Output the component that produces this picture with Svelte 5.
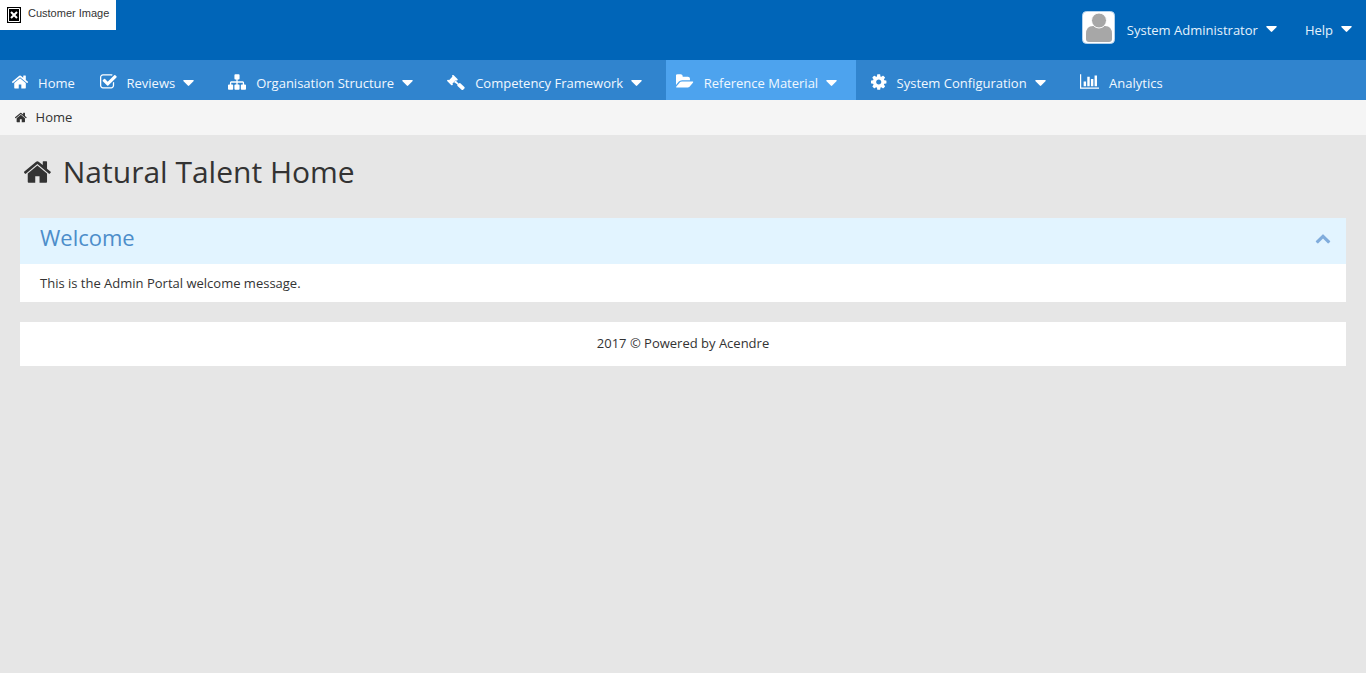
<script>
  const icons = {
    home: { x: 96, w: 1600, d: 'M1472 992v480q0 26-19 45t-45 19h-384v-384h-256v384h-384q-26 0-45-19t-19-45v-480q0-1 .5-3t.5-3l575-474 575 474q1 2 1 6zm223-69l-62 74q-8 9-21 11h-3q-13 0-21-7l-692-577-692 577q-12 8-24 7-13-2-21-11l-62-74q-8-10-7-23.5t11-21.5l719-599q32-26 76-26t76 26l244 204v-195q0-14 9-23t23-9h192q14 0 23 9t9 23v408l219 182q10 8 11 21.5t-7 23.5z' },
    check: { x: 64, w: 1664, d: 'M1472 930v318q0 119-84.5 203.5t-203.5 84.5h-832q-119 0-203.5-84.5t-84.5-203.5v-832q0-119 84.5-203.5t203.5-84.5h832q63 0 117 25 15 7 18 23 3 17-9 29l-49 49q-10 10-23 10-3 0-9-2-23-6-45-6h-832q-66 0-113 47t-47 113v832q0 66 47 113t113 47h832q66 0 113-47t47-113v-254q0-13 9-22l64-64q10-10 23-10 6 0 12 3 20 8 20 29zm231-489l-814 814q-24 24-57 24t-57-24l-430-430q-24-24-24-57t24-57l110-110q24-24 57-24t57 24l263 263 647-647q24-24 57-24t57 24l110 110q24 24 24 57t-24 57z' },
    sitemap: { x: 0, w: 1792, d: 'M1792 1248v320q0 40-28 68t-68 28h-320q-40 0-68-28t-28-68v-320q0-40 28-68t68-28h96v-192h-512v192h96q40 0 68 28t28 68v320q0 40-28 68t-68 28h-320q-40 0-68-28t-28-68v-320q0-40 28-68t68-28h96v-192h-512v192h96q40 0 68 28t28 68v320q0 40-28 68t-68 28h-320q-40 0-68-28t-28-68v-320q0-40 28-68t68-28h96v-192q0-52 38-90t90-38h512v-192h-96q-40 0-68-28t-28-68v-320q0-40 28-68t68-28h320q40 0 68 28t28 68v320q0 40-28 68t-68 28h-96v192h512q52 0 90 38t38 90v192h96q40 0 68 28t28 68z' },
    gavel: { x: 0, w: 1792, d: 'M40 830l370 370q70 60 140 0t0-120l-20-20 350-350 20 20q70 60 140 0t0-140l-370-370q-70-60-140 0t0 120l20 20-350 350-20-20q-70-60-140 0t0 140zM680 890l160-160 330 330q80-110 160-40l400 370q70 80 0 150l-120 120q-80 70-160 0l-400-370q-60-70 0-140z' },
    folder: { x: 0, w: 1856, wide: true, d: 'M1815 952q0 31-31 66l-336 396q-43 51-120.500 86.500t-143.500 35.500h-1088q-34 0-60.500-13t-26.500-43q0-31 31-66l336-396q43-51 120.500-86.500t143.500-35.500h1088q34 0 60.500 13t26.500 43zm-343-344v160h-832q-94 0-197 47.500t-164 119.500l-337 396-5 6q0-4-.5-12.500t-.5-12.500v-960q0-92 66-158t158-66h320q92 0 158 66t66 158v32h544q92 0 158 66t66 158z' },
    cog: { x: 128, w: 1536, d: 'M1152 896q0-106-75-181t-181-75-181 75-75 181 75 181 181 75 181-75 75-181zm512-109v222q0 12-8 23t-20 13l-185 28q-19 54-39 91 35 50 107 138 10 12 10 25t-9 23q-27 37-99 108t-94 71q-12 0-26-9l-138-108q-44 23-91 38-16 136-29 186-7 28-36 28h-222q-14 0-24.500-8.500t-11.500-21.500l-28-184q-49-16-90-37l-141 107q-10 9-25 9-14 0-25-11-126-114-165-168-7-10-7-23 0-12 8-23 15-21 51-66.500t54-70.500q-27-50-41-99l-183-27q-13-2-21-12.500t-8-23.500v-222q0-12 8-23t19-13l186-28q14-46 39-92-40-57-107-138-10-12-10-24 0-10 9-23 26-36 98.500-107.500t94.500-71.500q13 0 26 10l138 107q44-23 91-38 16-136 29-186 7-28 36-28h222q14 0 24.500 8.500t11.500 21.500l28 184q49 16 90 37l142-107q9-9 24-9 13 0 25 10 129 119 165 170 7 8 7 22 0 12-8 23-15 21-51 66.500t-54 70.500q26 50 41 98l183 28q13 2 21 12.500t8 23.500z' },
    chart: { x: 0, w: 2048, wide: true, d: 'M640 896v512h-256v-512h256zm384-512v1024h-256v-1024h256zm1024 1152v128h-2048v-1536h128v1408h1920zm-640-896v768h-256v-768h256zm384-384v1152h-256v-1152h256z' },
    up: { x: 0, w: 1792, d: 'M1683 1331l-166 165q-19 19-45 19t-45-19l-531-531-531 531q-19 19-45 19t-45-19l-166-165q-19-19-19-45.500t19-45.500l742-741q19-19 45-19t45 19l742 741q19 19 19 45.500t-19 45.500z' }
  };
  const items = [
    { label: 'Home', icon: 'home' },
    { label: 'Reviews', icon: 'check', menu: true },
    { label: 'Organisation Structure', icon: 'sitemap', menu: true },
    { label: 'Competency Framework', icon: 'gavel', menu: true },
    { label: 'Reference Material', icon: 'folder', menu: true, active: true },
    { label: 'System Configuration', icon: 'cog', menu: true },
    { label: 'Analytics', icon: 'chart' }
  ];
  let open = $state(true);
</script>

{#snippet icon(name)}
  <svg class="icon" class:wide={icons[name].wide} viewBox="{icons[name].x} 0 {icons[name].w} 1792" aria-hidden="true"><path d={icons[name].d} /></svg>
{/snippet}
{#snippet caret()}
  <svg class="caret" viewBox="0 0 11 6" aria-hidden="true"><path d="M1 0h9q1 0 .7.900l-4.500 4.700q-.7.700-1.400 0L.3.900Q0 0 1 0z" /></svg>
{/snippet}

<header>
  <a class="logo" href="#home">
    <svg viewBox="0 0 14 16" aria-hidden="true">
      <path d="M0 0h14v16H0z" fill="#000" /><path d="M1.500 1.500h11v13h-11z" fill="none" stroke="#fff" />
      <path d="M4 5l6 6M10 5l-6 6" stroke="#fff" stroke-width="2" />
    </svg>
    <span>Customer Image</span>
  </a>
  <div class="account">
    <button class="user">
      <svg class="avatar" viewBox="0 0 33 33" aria-hidden="true">
        <rect x=".5" y=".5" width="32" height="32" rx="4" fill="#fff" stroke="#b5d3ed" />
        <path d="M4 28v-5q0-8 7-8h12q7 0 7 8v5q0 3-3 3H7q-3 0-3-3z" fill="#a7a7a7" />
        <circle cx="17" cy="9.500" r="7.500" fill="#a7a7a7" stroke="#fff" />
      </svg>
      <span>System Administrator</span>{@render caret()}
    </button>
    <button class="help"><span>Help</span>{@render caret()}</button>
  </div>
</header>
<nav class="main">
  {#each items as item}
    {#if item.menu}
      <button class="item menu" class:active={item.active}>{@render icon(item.icon)}<span>{item.label}</span>{@render caret()}</button>
    {:else}
      <a class="item" href="#{item.label}">{@render icon(item.icon)}<span>{item.label}</span></a>
    {/if}
  {/each}
</nav>
<nav class="crumbs"><a href="#home">{@render icon('home')}<span>Home</span></a></nav>
<main>
  <h1>{@render icon('home')}<span>Natural Talent Home</span></h1>
  <section>
    <div class="head">
      <h2>Welcome</h2>
      <button class="toggle" aria-label="Toggle Welcome" aria-expanded={open} onclick={() => (open = !open)}>{@render icon('up')}</button>
    </div>
    {#if open}<p>This is the Admin Portal welcome message.</p>{/if}
  </section>
  <footer>2017 © Powered by Acendre</footer>
</main>

<style>
  :global(body) { background: #e6e6e6; color: #333; font: 13px/20px "Open Sans", sans-serif; }
  button { margin: 0; padding: 0; border: 0; background: none; font: inherit; color: inherit; cursor: pointer; }
  a { color: inherit; text-decoration: none; }
  h1, h2, p { margin: 0; font-weight: 400; }
  .icon { display: block; height: 17px; fill: currentColor; flex: none; }
  .caret { display: block; width: 11px; height: 6px; margin-left: 8px; fill: #fff; flex: none; }
  header { display: flex; justify-content: space-between; align-items: flex-start; min-height: 60px; background: #0065b8; color: #e4f2fc; }
  .logo { display: flex; align-items: center; gap: 7px; box-sizing: border-box; height: 30px; padding: 0 7px; background: #fff; color: #333; font: 11px/16px "Liberation Sans", sans-serif; }
  .logo svg { width: 14px; height: 16px; }
  .logo span { padding-bottom: 4px; }
  .account { display: flex; align-items: center; gap: 28px; padding: 11px 14px 0 0; }
  .user, .help { display: flex; align-items: center; height: 33px; }
  .account span { padding-top: 5px; }
  .account .caret { margin-top: 3px; }
  .avatar { width: 33px; height: 33px; margin-right: 12px; }
  .main { display: flex; gap: 5px; padding-left: 2px; background: #3084ce; color: #f0f8ff; }
  .item { display: flex; align-items: center; box-sizing: border-box; height: 40px; padding: 5px 10px 0; white-space: nowrap; }
  .item span { margin-left: 10px; }
  .item .icon { height: 18px; margin-bottom: 2px; fill: #fff; }
  .item .wide { height: 17px; }
  .menu { padding-right: 19px; }
  .active { background: #4da3ee; }
  .crumbs { padding: 7px 15px 8px; background: #f5f5f5; }
  .crumbs a { display: inline-flex; align-items: center; gap: 9px; vertical-align: top; }
  .crumbs .icon { height: 13px; }
  main { padding: 14px 20px 20px; }
  h1 { display: flex; align-items: center; gap: 12px; margin: 0 4px 24px; font-size: 30px; line-height: 45px; }
  h1 .icon { height: 30px; }
  section { margin-bottom: 20px; background: #fff; }
  .head { display: flex; align-items: center; justify-content: space-between; box-sizing: border-box; height: 46px; padding: 0 15px 6px 20px; background: #e2f4ff; }
  h2 { padding-bottom: 2px; color: #4c8dca; font-size: 22px; line-height: 30px; }
  .toggle { color: #80acdc; }
  .toggle .icon { height: 16px; }
  p { padding: 9px 20px; }
  footer { padding: 11px 20px 13px; background: #fff; text-align: center; }
</style>
